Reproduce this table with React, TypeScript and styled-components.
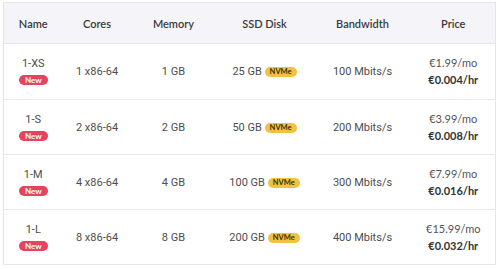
import React from "react";
import styled, { createGlobalStyle } from "styled-components";

const GlobalStyle = createGlobalStyle`
    body {
        margin: 0;
        background: #fff;
        font-family: Lato, "Noto Sans", sans-serif;
    }
`

type Plan = {
    name: string;
    cores: string;
    memory: string;
    disk: string;
    bandwidth: string;
    monthly: string;
    hourly: string;
};

const planes: Plan[] = [
    { name: "1-XS", cores: "1 x86-64", memory: "1 GB", disk: "25 GB", bandwidth: "100 Mbits/s", monthly: "€1.99/mo", hourly: "€0.004/hr" },
    { name: "1-S", cores: "2 x86-64", memory: "2 GB", disk: "50 GB", bandwidth: "200 Mbits/s", monthly: "€3.99/mo", hourly: "€0.008/hr" },
    { name: "1-M", cores: "4 x86-64", memory: "4 GB", disk: "100 GB", bandwidth: "300 Mbits/s", monthly: "€7.99/mo", hourly: "€0.016/hr" },
    { name: "1-L", cores: "8 x86-64", memory: "8 GB", disk: "200 GB", bandwidth: "400 Mbits/s", monthly: "€15.99/mo", hourly: "€0.032/hr" },
];

const anchos = [59, 69, 84, 98, 98, 84];
const titulos = ["Name", "Cores", "Memory", "SSD Disk", "Bandwidth", "Price"];

const App = () => {
    return (
        <>
            <GlobalStyle />
            <Contenedor>
                <Tabla>
                    <colgroup>
                        {anchos.map((w, i) => <col key={i} style={{ width: w }} />)}
                    </colgroup>
                    <thead>
                        <tr>
                            {titulos.map((t) => <Cabecera key={t}>{t}</Cabecera>)}
                        </tr>
                    </thead>
                    <tbody>
                        {planes.map((p, i) => (
                            <Fila key={p.name} $alto={i === 0 ? 56 : 55}>
                                <Celda>
                                    <Nombre>{p.name}</Nombre>
                                    <EtiquetaNueva>New</EtiquetaNueva>
                                </Celda>
                                <Celda>{p.cores}</Celda>
                                <Celda>{p.memory}</Celda>
                                <Celda>
                                    {p.disk} <EtiquetaNvme>NVMe</EtiquetaNvme>
                                </Celda>
                                <Celda>{p.bandwidth}</Celda>
                                <Celda>
                                    <Mensual>{p.monthly}</Mensual>
                                    <PorHora>{p.hourly}</PorHora>
                                </Celda>
                            </Fila>
                        ))}
                    </tbody>
                </Tabla>
            </Contenedor>
        </>
    )
}

export default App;


const Contenedor = styled.div`
    padding: 2px 5px 0 3px;
`

const Tabla = styled.table`
    width: 492px;
    border-collapse: collapse;
    table-layout: fixed;
    border: 1px solid #e4e4e9;
`

const Cabecera = styled.th`
    height: 40px;
    padding: 0;
    background: #f5f5f9;
    color: #3a3a3a;
    font-family: Lato, sans-serif;
    font-weight: 600;
    font-size: 11px;
    text-align: center;
    border-bottom: 1px solid #e4e4e9;
`

const Fila = styled.tr<{ $alto: number }>`
    height: ${(p) => p.$alto}px;
    border-bottom: 1px solid #e8e8ec;
`

const Celda = styled.td`
    padding: 0;
    text-align: center;
    vertical-align: middle;
    color: #4d4d4d;
    font-family: Roboto, sans-serif;
    font-size: 11px;
`

const Nombre = styled.div`
    line-height: 13px;
    margin-bottom: 3px;
`

const EtiquetaNueva = styled.span`
    display: inline-block;
    background: #e8435e;
    color: #fff;
    font-family: Lato, sans-serif;
    font-weight: 700;
    font-size: 8px;
    line-height: 10px;
    padding: 0 6px;
    border-radius: 6px;
`

const EtiquetaNvme = styled.span`
    display: inline-block;
    background: #f1c240;
    color: #3a3000;
    font-family: Lato, sans-serif;
    font-weight: 700;
    font-size: 7.5px;
    line-height: 10px;
    padding: 0 5px;
    border-radius: 6px;
    vertical-align: 1px;
`

const Mensual = styled.div`
    font-family: Lato, sans-serif;
    font-size: 11px;
    color: #555;
    line-height: 14px;
    margin-bottom: 3px;
`

const PorHora = styled.div`
    font-family: Lato, sans-serif;
    font-weight: 700;
    font-size: 11px;
    color: #333;
    line-height: 14px;
`
